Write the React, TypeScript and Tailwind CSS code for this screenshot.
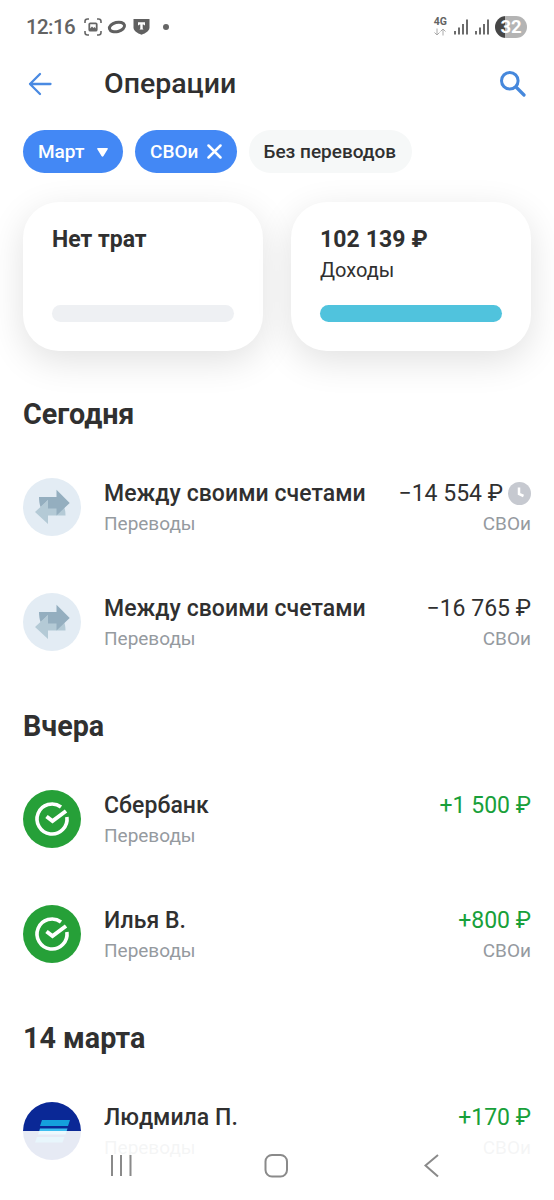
import type { ReactNode } from 'react';

interface Operation {
  icon: ReactNode;
  title: string;
  amount: string;
  account?: string;
  pending?: boolean;
}

interface Section {
  title: string;
  items: Operation[];
}

function TransferIcon() {
  return (
    <svg viewBox="0 0 58 58" className="size-[58px] shrink-0">
      <circle cx="29" cy="29" r="29" fill="#e3ecf4" />
      <path d="M42.500 37.500H25V46L12 34L25 22V29H41C42 31 42.500 34 42.500 37.500Z" fill="#b4cad6" />
      <path d="M16 19H33.500V11.700L46.700 25L33.500 37.500V30.500H25V22L17.500 29C16.500 26 16 22.500 16 19Z" fill="#94aebf" />
    </svg>
  );
}

function SberIcon() {
  return (
    <svg viewBox="0 0 58 58" className="size-[58px] shrink-0" fill="none" stroke="#fff">
      <circle cx="29" cy="29" r="29" fill="#26a038" stroke="none" />
      <path d="M38 17A15 15 0 1 0 43.900 27" strokeWidth="3.600" />
      <path d="M23.500 26.500L29.500 31L43 21" strokeWidth="4" />
    </svg>
  );
}

function StripesIcon() {
  return (
    <svg viewBox="0 0 58 58" className="size-[58px] shrink-0">
      <circle cx="29" cy="29" r="29" fill="#0a2896" />
      <path d="M19 18H47L45 24H17Z" fill="#14a0dc" />
      <path d="M17 26.500H44.500L42.500 32.500H15Z" fill="#3cbef0" />
      <path d="M14 35H41.500L39.500 40.500H12Z" fill="#14a0dc" />
    </svg>
  );
}

const SECTIONS: Section[] = [
  {
    title: 'Сегодня',
    items: [
      { icon: <TransferIcon />, title: 'Между своими счетами', amount: '−14 554 ₽', account: 'СВОи', pending: true },
      { icon: <TransferIcon />, title: 'Между своими счетами', amount: '−16 765 ₽', account: 'СВОи' },
    ],
  },
  {
    title: 'Вчера',
    items: [
      { icon: <SberIcon />, title: 'Сбербанк', amount: '+1 500 ₽' },
      { icon: <SberIcon />, title: 'Илья В.', amount: '+800 ₽', account: 'СВОи' },
    ],
  },
  {
    title: '14 марта',
    items: [{ icon: <StripesIcon />, title: 'Людмила П.', amount: '+170 ₽', account: 'СВОи' }],
  },
];

function Signal() {
  return (
    <svg viewBox="0 0 15 16" className="h-4 w-[15px]" fill="#6c6c6c">
      <rect x="0" y="12" width="2" height="3.500" />
      <rect x="4" y="8.500" width="2" height="7" />
      <rect x="8" y="5" width="2" height="10.500" />
      <rect x="12" y="0.500" width="2" height="15" />
    </svg>
  );
}

function StatusBar() {
  return (
    <div className="flex h-[53px] items-center pl-[26px] pr-[27px] text-[#636363]">
      <span className="w-[49px] pt-px text-[20.5px] font-medium tracking-[-0.6px] whitespace-nowrap">12:16</span>
      <svg viewBox="0 0 18 18" className="ml-[9px] size-[18px]" fill="none" stroke="#666" strokeWidth="1.6">
        <path d="M1 5V3.500Q1 1 3.500 1H5M13 1H14.500Q17 1 17 3.500V5M17 13V14.500Q17 17 14.500 17H13M5 17H3.500Q1 17 1 14.500V13" />
        <rect x="5.300" y="5.300" width="7.400" height="7.400" rx="1" strokeWidth="1.800" />
        <path d="M5.500 11L8 8.500L9.500 10L10.500 9L12.500 11V12.500H5.500Z" fill="#666" stroke="none" />
      </svg>
      <svg viewBox="0 0 20 14" className="ml-[5px] h-3.5 w-5" fill="none" stroke="#606060" strokeWidth="3">
        <ellipse cx="10" cy="7" rx="7.700" ry="4.600" transform="rotate(-14 10 7)" />
      </svg>
      <svg viewBox="0 0 17 17" className="ml-1.5 size-[17px]">
        <path d="M0.500 1H16.500V9.500C16.500 13 13 15 8.500 16.800C4 15 0.500 13 0.500 9.500Z" fill="#606060" />
        <path d="M5 4.300H12V7.300H11L10.600 6.500H9.700V10.600L10.500 11.500H6.500L7.300 10.600V6.500H6.400L6 7.300H5Z" fill="#fff" />
      </svg>
      <span className="ml-[13px] size-1.5 rounded-full bg-[#666]" />

      <div className="ml-auto flex items-center">
        <div className="flex flex-col items-center">
          <span className="text-[10.5px] leading-[10px] font-bold">4G</span>
          <svg viewBox="0 0 12 8" className="mt-px h-2 w-3" fill="none" stroke="#aaa" strokeWidth="1">
            <path d="M3 0.500V7M0.500 4.500L3 7L5.500 4.500M9 7.500V1M6.500 3.500L9 1L11.500 3.500" />
          </svg>
        </div>
        <div className="ml-[7px] flex gap-1.5">
          <Signal />
          <Signal />
        </div>
        <div className="ml-[5px] flex h-[22px] w-8 items-center justify-center rounded-full bg-linear-to-r from-[#464646] from-32% to-[#b4b4b4] to-32% pt-px text-[18.5px] leading-none font-bold text-white">
          32
        </div>
      </div>
    </div>
  );
}

function ClockBadge() {
  return (
    <svg viewBox="0 0 23 23" className="ml-[5px] size-[23px]">
      <circle cx="11.500" cy="11.500" r="11.500" fill="#c6c9d0" />
      <path d="M11 5.500V12L15.500 14" fill="none" stroke="#fff" strokeWidth="2.500" />
    </svg>
  );
}

function OperationRow({ icon, title, amount, account, pending }: Operation) {
  const color = amount.startsWith('+') ? 'text-[#18a03a]' : 'text-[#303030]';
  return (
    <div className="flex h-[115.5px] items-center">
      <div className="-mt-0.5">{icon}</div>
      <div className="ml-[23px] h-[60px] flex-1 pt-px">
        <div className="text-[23px] leading-[30px] font-medium tracking-[0.05px] whitespace-nowrap text-[#303030]">{title}</div>
        <div className="text-[19px] leading-[30px] text-[#959a9f]">Переводы</div>
      </div>
      <div className="h-[60px] pt-px text-right">
        <div className={`flex items-center justify-end text-[23px] leading-[30px] whitespace-nowrap ${color}`}>
          {amount}
          {pending && <ClockBadge />}
        </div>
        <div className="text-[19px] leading-[30px] text-[#959a9f]">{account}</div>
      </div>
    </div>
  );
}

export default function App() {
  return (
    <div className="relative h-[1200px] w-[554px] overflow-hidden bg-white font-[Roboto,'Noto_Sans',sans-serif] text-[#303030]">
      <StatusBar />

      {/* Header */}
      <div className="flex h-[62px] items-center pr-[28px] pl-[28px]">
        <svg viewBox="0 0 24 24" className="size-6" fill="none" stroke="#4a8ae2" strokeWidth="2.300" strokeLinecap="round" strokeLinejoin="round">
          <path d="M22.500 12H2M12 2L2 12L12 22" />
        </svg>
        <h1 className="ml-[52px] pt-px text-[28.5px] leading-none font-medium">Операции</h1>
        <svg viewBox="0 0 26 26" className="ml-auto size-[26px]" fill="none" stroke="#4688dc" strokeLinecap="round">
          <circle cx="9.800" cy="9.800" r="8.300" strokeWidth="3" />
          <path d="M16.500 16.500L24 24" strokeWidth="3.200" />
        </svg>
      </div>

      {/* Filters */}
      <div className="mt-[15px] flex h-[43px] gap-3 px-[23px] text-[19px] font-medium whitespace-nowrap">
        <div className="flex w-[100px] items-center rounded-full bg-[#4388f5] pt-px pl-[15px] text-white">
          Март
          <svg viewBox="0 0 11 9" className="ml-[13px] h-[9px] w-[11px]" fill="#fff">
            <path d="M1 0H10Q11.500 0 10.500 1.500L6.500 8Q5.500 9.500 4.500 8L0.500 1.500Q-0.500 0 1 0Z" />
          </svg>
        </div>
        <div className="flex w-[102px] items-center rounded-full bg-[#4388f5] pt-px pl-[15px] text-white">
          СВОи
          <svg viewBox="0 0 15 15" className="-mt-px ml-[9px] size-[15px]" fill="none" stroke="#fff" strokeWidth="2.500" strokeLinecap="round">
            <path d="M1.500 1.500L13.500 13.500M13.500 1.500L1.500 13.500" />
          </svg>
        </div>
        <div className="flex w-[163px] items-center rounded-full bg-[#f6f8f8] pt-px pl-[14.5px]">Без переводов</div>
      </div>

      {/* Totals */}
      <div className="mt-[29px] flex gap-7 px-[23px]">
        <div className="h-[149px] w-60 rounded-[36px] bg-white px-[29px] pt-[23px] shadow-[0_10px_36px_rgba(0,0,0,0.12)]">
          <div className="text-[23px] leading-[30px] font-bold">Нет трат</div>
          <div className="mt-[50px] h-[17px] rounded-full bg-[#eef0f3]" />
        </div>
        <div className="h-[149px] w-60 rounded-[36px] bg-white px-[29px] pt-[23px] shadow-[0_10px_36px_rgba(0,0,0,0.12)]">
          <div className="text-[23px] leading-[30px] font-bold tracking-[0.1px]">102 139 ₽</div>
          <div className="text-[20px] leading-[31px]">Доходы</div>
          <div className="mt-[19px] h-[17px] rounded-full bg-[#50c3dd]" />
        </div>
      </div>

      {/* Operations */}
      <div className="mt-[18px] px-[23px]">
        {SECTIONS.map(section => (
          <div key={section.title}>
            <h2 className="h-[81px] pt-[27px] text-[28.7px] leading-[36px] font-bold">{section.title}</h2>
            {section.items.map((item, i) => (
              <OperationRow key={i} {...item} />
            ))}
          </div>
        ))}
      </div>

      {/* Navigation bar */}
      <div className="absolute inset-x-0 bottom-0 h-[69px] bg-white/90">
        <svg viewBox="0 0 554 69" className="h-[69px] w-full" fill="none" stroke="#8a8a8a" strokeWidth="2">
          <path d="M112 24V45M121 24V45M130.500 24V45" />
          <rect x="265.500" y="24" width="21.500" height="21.500" rx="6.500" />
          <path d="M438 24L425.500 34.500L438 45.500" />
        </svg>
      </div>
    </div>
  );
}
